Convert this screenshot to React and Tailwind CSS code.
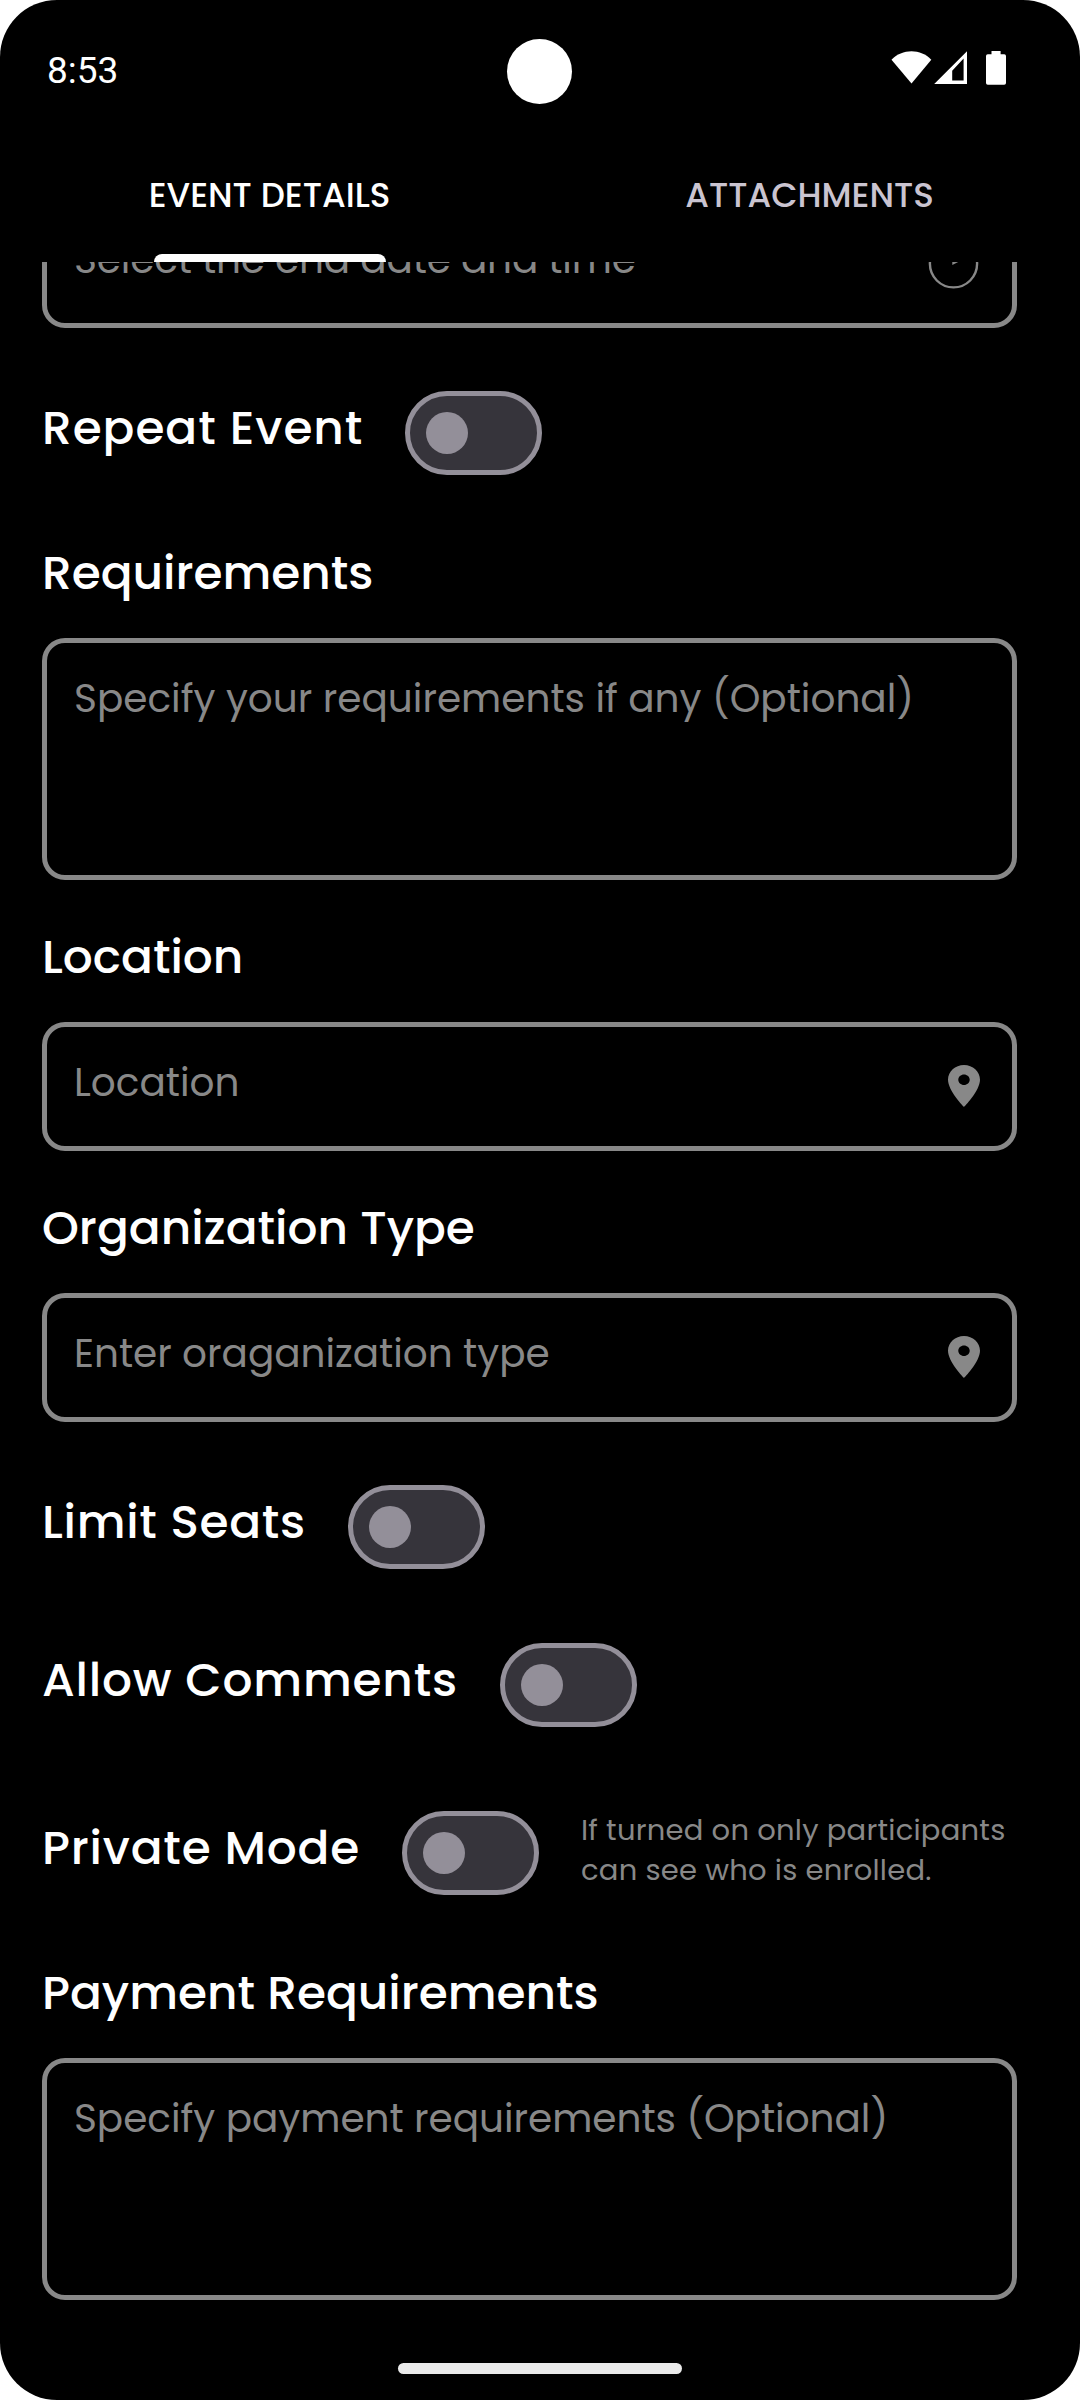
function StatusBar() {
  return (
    <div className="relative flex h-[136px] shrink-0 items-start justify-between pl-[47px] pr-[74px]">
      <span className="pt-[49px] font-['Roboto',sans-serif] text-[37px] leading-[44px] text-white">8:53</span>
      <div className="absolute left-[507px] top-[39px] size-[65px] rounded-full bg-white" />
      <svg className="mt-[50px] h-[36px] w-[115px]" viewBox="891 50 115 36" fill="#fff">
        <path d="M891.5 59.8C902 48.3 921 48.3 931.3 59.8L911.5 83.6Z" />
        <path fillRule="evenodd" d="M934.2 84L967 51.3V84ZM952.2 70.8V80.4H963.6V58.6Z" />
        <path d="M991.5 51H1000.6V54.3H1004.2Q1006 54.3 1006 56.1V83Q1006 84.8 1004.2 84.8H987.8Q986 84.8 986 83V56.1Q986 54.3 987.8 54.3H991.5Z" />
      </svg>
    </div>
  );
}

function Tabs() {
  return (
    <div className="grid h-[126px] shrink-0 grid-cols-2 text-center text-[34.1px] font-medium leading-[52px]">
      <div className="flex flex-col items-center justify-between pt-[33px] text-white">
        <span className="pr-px">EVENT DETAILS</span>
        <div className="h-[8px] w-[232px] rounded-t-[8px] bg-white" />
      </div>
      <div className="pr-px pt-[33px] text-[#cac4d0]">ATTACHMENTS</div>
    </div>
  );
}

function Pin() {
  return (
    <svg className="mr-[32px] mt-[38px] h-[42px] w-[32px] shrink-0" viewBox="5 2 14 20" preserveAspectRatio="none" fill="#888">
      <path d="M12 2C8.13 2 5 5.13 5 9c0 5.25 7 13 7 13s7-7.75 7-13c0-3.87-3.13-7-7-7zm0 9.5c-1.38 0-2.5-1.12-2.5-2.5s1.12-2.5 2.5-2.5 2.5 1.12 2.5 2.5-1.12 2.5-2.5 2.5z" />
    </svg>
  );
}

function Clock() {
  return (
    <svg className="mr-[32px] mt-[34px] size-[52px] shrink-0" viewBox="0 0 52 52" fill="none" stroke="#888" strokeWidth="2.4">
      <circle cx="25.5" cy="25.8" r="23.6" />
      <path d="M25.5 11V25L31.5 22" />
    </svg>
  );
}

function Field({ text, icon, tall, tracking = "tracking-[-0.03px]" }) {
  return (
    <div
      className={`flex shrink-0 justify-between rounded-[23px] border-[5px] border-[#888] pl-[27px] ${tall ? "h-[242px]" : "h-[129px]"}`}
    >
      <span className={`whitespace-nowrap pt-[26px] text-[39px] leading-[60px] text-[#888] ${tracking}`}>{text}</span>
      {icon}
    </div>
  );
}

function Heading({ children }) {
  return <h2 className="mb-[30px] whitespace-nowrap text-[47px] font-medium leading-[71px] text-white">{children}</h2>;
}

function Toggle({ label, note, tracking = "tracking-[0.8px]" }) {
  return (
    <div className="flex h-[84px] shrink-0 items-start gap-[42px]">
      <span className={`whitespace-nowrap pt-px text-[47px] font-medium leading-[71px] text-white ${tracking}`}>{label}</span>
      <div className="flex h-[84px] w-[137px] shrink-0 items-center rounded-full border-[5px] border-[#938f99] bg-[#36343b] pl-[16px]">
        <div className="size-[42px] rounded-full bg-[#938f99]" />
      </div>
      {note && <p className="-mt-px whitespace-pre text-[29px] leading-[40px] tracking-[0.24px] text-[#888]">{note}</p>}
    </div>
  );
}

export default function App() {
  return (
    <div className="h-[2400px] w-[1080px] bg-white">
      <div className="flex h-full flex-col overflow-hidden rounded-[57px] bg-black font-['Poppins','Inter',sans-serif]">
        <StatusBar />
        <Tabs />
        <div className="flex-1 overflow-hidden pl-[42px] pr-[63px]">
          <div className="-mt-[63px]">
            <Field text="Select the end date and time" icon={<Clock />} tracking="tracking-[-0.17px]" />
          </div>
          <div className="mt-[63px]">
            <Toggle label="Repeat Event" tracking="tracking-[0.95px]" />
          </div>
          <div className="mt-[62px]">
            <Heading>Requirements</Heading>
            <Field text="Specify your requirements if any (Optional)" tall tracking="tracking-normal" />
          </div>
          <div className="mt-[41px]">
            <Heading>Location</Heading>
            <Field text="Location" icon={<Pin />} />
          </div>
          <div className="mt-[41px]">
            <Heading>Organization Type</Heading>
            <Field text="Enter oraganization type" icon={<Pin />} />
          </div>
          <div className="mt-[63px]">
            <Toggle label="Limit Seats" tracking="tracking-[0.7px]" />
          </div>
          <div className="mt-[74px]">
            <Toggle label="Allow Comments" />
          </div>
          <div className="mt-[84px]">
            <Toggle label="Private Mode" note={"If turned on only participants\ncan see who is enrolled."} />
          </div>
          <div className="mt-[62px]">
            <Heading>Payment Requirements</Heading>
            <Field text="Specify payment requirements (Optional)" tall />
          </div>
        </div>
        <div className="flex h-[37px] shrink-0 justify-center">
          <div className="h-[11px] w-[284px] rounded-full bg-[#eaeaea]" />
        </div>
      </div>
    </div>
  );
}
